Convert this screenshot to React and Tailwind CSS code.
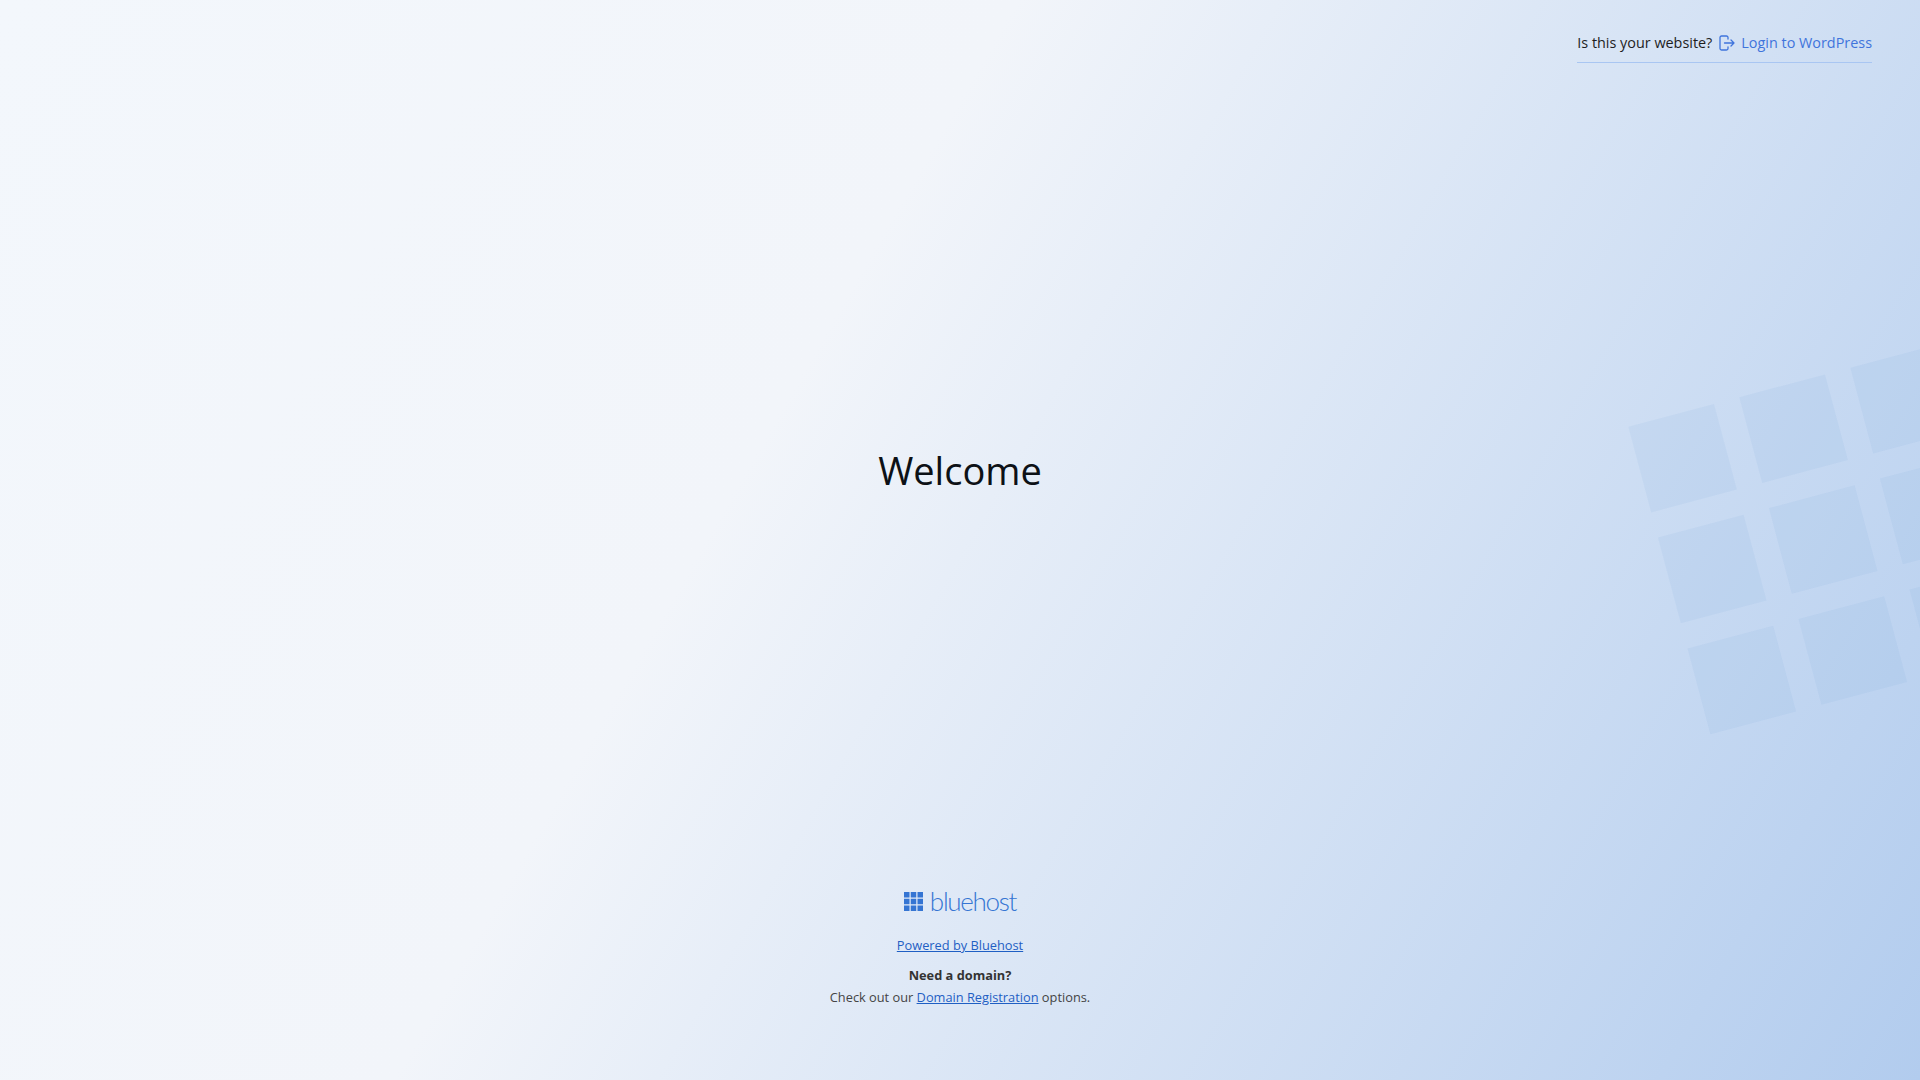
const squares = [];
for (let c = 0; c < 3; c++) {
  for (let r = 0; r < 3; r++) {
    const x = 1628.3 + c * 111 + r * 29.6;
    const y = 426.7 - c * 29.5 + r * 110.9;
    squares.push(
      `${x},${y} ${x + 85.7},${y - 22.8} ${x + 85.7 + 22.9},${y - 22.8 + 85.7} ${x + 22.9},${y + 85.7}`
    );
  }
}

function Watermark() {
  return (
    <svg className="absolute left-0 top-0 h-[1080px] w-[1920px]" viewBox="0 0 1920 1080" aria-hidden="true">
      {squares.map((p) => (
        <polygon key={p} points={p} fill="#2f6fc4" fillOpacity="0.05" />
      ))}
    </svg>
  );
}

function LogoMark() {
  const cells = [];
  for (let r = 0; r < 3; r++) for (let c = 0; c < 3; c++) cells.push([c, r]);
  return (
    <svg width="19" height="19" viewBox="0 0 19 19" aria-hidden="true">
      {cells.map(([c, r]) => (
        <rect key={`${c}${r}`} x={c * 6.75} y={r * 6.75} width="5.5" height="5.5" fill="#3575d3" />
      ))}
    </svg>
  );
}

function LoginIcon() {
  return (
    <svg width="16" height="16" viewBox="0 0 16 16" fill="none" stroke="#3f74dc" strokeWidth="1.3" strokeLinecap="round" strokeLinejoin="round" aria-hidden="true">
      <path d="M9 4V2.5A1.5 1.5 0 0 0 7.5 1H2.5A1.5 1.5 0 0 0 1 2.5V13.5A1.5 1.5 0 0 0 2.5 15H7.5A1.5 1.5 0 0 0 9 13.5V12" />
      <path d="M5.5 8H15M12 5L15 8L12 11" />
    </svg>
  );
}

export default function App() {
  return (
    <div className="relative flex h-[1080px] w-full flex-col overflow-hidden bg-[linear-gradient(120deg,#f3f7fc_0%,#f2f5fa_40%,#b2ccee_100%)] font-['Open_Sans',sans-serif]">
      <Watermark />
      <header className="relative flex justify-end pr-12 pt-[31px]">
        <div className="flex h-[32px] items-start gap-[7px] border-b border-[#a9c6f2] text-[14.4px] leading-[24px]">
          <span className="text-[#1e1e1e]">Is this your website?</span>
          <a className="flex items-center gap-[6px] text-[#3f74dc]" href="#">
            <LoginIcon />
            Login to WordPress
          </a>
        </div>
      </header>
      <main className="relative flex flex-1 flex-col items-center">
        <h1 className="mt-[379px] text-[38px] font-normal leading-[56px] text-[#0d1116]">Welcome</h1>
        <div className="mt-[391px] flex h-[24px] items-center gap-[7px]">
          <LogoMark />
          <span className="font-['Lato',sans-serif] text-[26px] font-light leading-[24px] tracking-[-1.3px] text-[#3575d3]">bluehost</span>
        </div>
        <a className="mt-[21px] text-[12.8px] leading-[22px] text-[#1f5fc4] underline" href="#">Powered by Bluehost</a>
        <p className="mt-[8px] text-[12.8px] font-bold leading-[22px] text-[#333333]">Need a domain?</p>
        <p className="text-[12.8px] leading-[22px] text-[#444444]">
          Check out our <a className="text-[#1f5fc4] underline" href="#">Domain Registration</a> options.
        </p>
      </main>
    </div>
  );
}
